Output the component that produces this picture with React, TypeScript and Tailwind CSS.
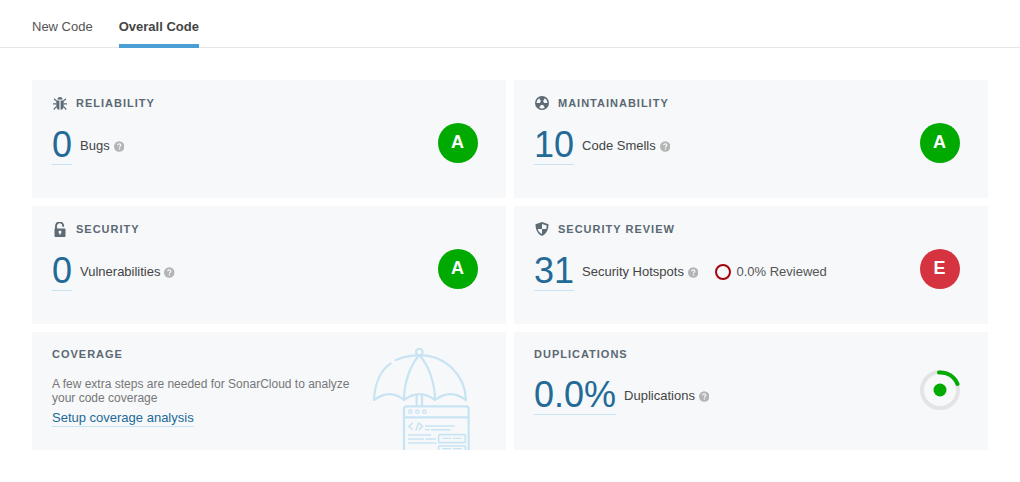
import { ReactNode } from "react";

const font = { fontFamily: '"Liberation Sans", Arial, sans-serif' };

function Help() {
  return (
    <svg width="10.500" height="11" viewBox="0 0 12 12" className="shrink-0">
      <circle cx="6" cy="6" r="6" fill="#b4b4b4" />
      <path d="M4.200 4.700c0-1.100.8-1.700 1.800-1.700s1.800.6 1.800 1.500c0 1.300-1.500 1.300-1.500 2.500" fill="none" stroke="#f6f8fa" strokeWidth="1.400" />
      <rect x="5.500" y="8" width="1.500" height="1.500" fill="#f6f8fa" />
    </svg>
  );
}

function BugIcon() {
  return (
    <svg width="14" height="15" viewBox="0 0 14 15" fill="#5d6b75">
      <path d="M4.300 3.600C4.400 1.900 5.500 1 7 1s2.600.9 2.700 2.600z" />
      <path d="M3.300 4.400h3.100v9.400c-1.800-.2-3.100-1.500-3.100-3.300zM7.600 4.400h3.100v6.100c0 1.800-1.300 3.100-3.100 3.300z" />
      <path d="M1.400 2.300l2.400 2.200v1.400L.6 3.200zM12.600 2.300l-2.400 2.200v1.400l3.200-2.700zM0 7.200h3.400v1.300H0zM10.600 7.200H14v1.300h-3.400zM3.500 9.800v1.400l-2.300 2.700-.9-.8zM10.500 9.800v1.400l2.300 2.700.9-.8z" />
    </svg>
  );
}

function SmellIcon() {
  return (
    <svg width="14" height="14" viewBox="0 0 14 14">
      <circle cx="7" cy="7" r="7" fill="#5d6b75" />
      <path
        d="M9 7H12.600A5.600 5.600 0 0 0 9.800 2.150L8 5.270A2 2 0 0 1 9 7ZM5 7H1.400A5.600 5.600 0 0 1 4.200 2.150L6 5.270A2 2 0 0 0 5 7ZM6 8.730L4.200 11.850A5.600 5.600 0 0 0 9.800 11.850L8 8.730A2 2 0 0 1 6 8.730Z"
        fill="#f6f8fa"
      />
    </svg>
  );
}

function LockIcon() {
  return (
    <svg width="12" height="15" viewBox="0 0 12 15">
      <path d="M2 7V4a3.600 3.600 0 0 1 7.200 0v.8" fill="none" stroke="#5d6b75" strokeWidth="1.900" />
      <rect x="0.500" y="6.500" width="11" height="8.500" rx="1" fill="#5d6b75" />
      <circle cx="6" cy="10" r="1.500" fill="#f6f8fa" />
      <rect x="5.400" y="10" width="1.200" height="2.600" fill="#f6f8fa" />
    </svg>
  );
}

function ShieldIcon() {
  return (
    <svg width="14" height="14" viewBox="0 0 14 14" fill="#5d6b75">
      <path
        fillRule="evenodd"
        d="M7 0l6.500 2.200c0 5-1.700 9.400-6.500 11.800C2.200 11.600.5 7.200.5 2.200zM7 2v5H2.700c.3 2.200 1.800 3.800 4.300 5V7h4.300c.2-1 .3-2 .3-3.400z"
      />
    </svg>
  );
}

function Umbrella() {
  return (
    <svg
      className="absolute right-[34px] bottom-0"
      width="100"
      height="102"
      viewBox="36 24 300 306"
      fill="none"
      stroke="#c8e3f3"
      strokeWidth="6.500"
      strokeLinecap="round"
      strokeLinejoin="round"
    >
      <circle cx="178" cy="36" r="10" />
      <path d="M92 70C60 92 44 135 42 180Q90 145 132 180Q178 145 225 180Q270 145 318 180C316 110 260 45 178 46C150 46 125 52 108 60" />
      <path d="M178 46C150 75 132 130 132 180M178 46C206 75 225 130 225 180" />
      <path d="M170 165V198M186 165V198" />
      <rect x="132" y="199" width="194" height="160" rx="8" />
      <path d="M132 232H326" />
      <circle cx="151" cy="215" r="5" strokeWidth="4" />
      <circle cx="172" cy="215" r="5" strokeWidth="4" />
      <circle cx="193" cy="215" r="5" strokeWidth="4" />
      <path d="M157 250L146 259L157 268M176 248L168 270M178 250L188 259L178 268" strokeWidth="4.500" />
      <path d="M197 258H282M197 269H207M215 269H270M146 285H212M146 297H190M198 297H226M146 309H228" strokeWidth="4.500" />
      <rect x="236" y="284" width="80" height="24" rx="3" strokeWidth="5" />
      <rect x="236" y="318" width="80" height="24" rx="3" strokeWidth="5" />
      <path d="M248 295H272M280 295H304M248 326H272M280 326H304" strokeWidth="4" />
    </svg>
  );
}

function Rating({ letter, red }: { letter: string; red?: boolean }) {
  return (
    <div
      className={`flex h-10 w-10 shrink-0 items-center justify-center rounded-full pb-px pr-px text-[18px] font-bold text-white ${
        red ? "bg-[#d4333f]" : "bg-[#00aa00]"
      }`}
    >
      {letter}
    </div>
  );
}

function Donut() {
  return (
    <svg width="40" height="40" viewBox="0 0 40 40" className="-mt-[4px] shrink-0">
      <circle cx="20" cy="20" r="18" fill="none" stroke="#e4e4e4" strokeWidth="4" />
      <path d="M19 2.500A18 18 0 0 1 37.500 14" fill="none" stroke="#00aa00" strokeWidth="4" strokeLinecap="round" />
      <circle cx="20" cy="20" r="6.500" fill="#00aa00" />
    </svg>
  );
}

function Card({
  title,
  icon,
  tight,
  children,
}: {
  title: string;
  icon?: ReactNode;
  tight?: boolean;
  children: ReactNode;
}) {
  return (
    <div className={`relative h-[118px] overflow-hidden bg-[#f6f8fa] px-5 ${tight ? "pt-[15px]" : "pt-4"}`}>
      <div className="flex h-[14px] items-center">
        {icon && <span className="mr-[9px] flex w-[15px] justify-center">{icon}</span>}
        <h3 className="text-[11px] font-bold tracking-[1px] text-[#5b6873]">{title}</h3>
      </div>
      {children}
    </div>
  );
}

function Measure({
  value,
  label,
  extra,
  right,
  tight,
}: {
  value: string;
  label: string;
  extra?: ReactNode;
  right: ReactNode;
  tight?: boolean;
}) {
  return (
    <div className="mt-[13px] flex items-start pr-2">
      <div className={`flex items-center ${tight ? "mt-[3px]" : "mt-[4px]"}`}>
        <span className="border-b border-[#cae3f2] pb-px text-[36px] leading-[36px] text-[#236a97]">{value}</span>
        <span className="ml-2 mr-1 text-[13px] text-[#444]">{label}</span>
        <Help />
        {extra}
      </div>
      <div className="ml-auto">{right}</div>
    </div>
  );
}

export default function App() {
  return (
    <div style={font} className="h-[482px] w-[1020px] overflow-hidden bg-white">
      <div className="flex h-12 gap-[26px] border-b border-[#e6e6e6] pl-8 text-[13px]">
        <div className="pt-[17px] text-[#555]">New Code</div>
        <div className="-mb-px h-12 border-b-4 border-[#4b9fd5] pt-[17px] font-bold text-[#444]">Overall Code</div>
      </div>
      <div className="mt-8 grid grid-cols-2 gap-2 px-8">
        <Card title="RELIABILITY" icon={<BugIcon />}>
          <Measure value="0" label="Bugs" right={<Rating letter="A" />} />
        </Card>
        <Card title="MAINTAINABILITY" icon={<SmellIcon />}>
          <Measure value="10" label="Code Smells" right={<Rating letter="A" />} />
        </Card>
        <Card title="SECURITY" icon={<LockIcon />}>
          <Measure value="0" label="Vulnerabilities" right={<Rating letter="A" />} />
        </Card>
        <Card title="SECURITY REVIEW" icon={<ShieldIcon />}>
          <Measure
            value="31"
            label="Security Hotspots"
            right={<Rating letter="E" red />}
            extra={
              <div className="ml-[17px] flex items-center text-[13px] text-[#555]">
                <span className="mr-[5px] h-4 w-4 rounded-full border-2 border-[#a4030f]" />
                0.0% Reviewed
              </div>
            }
          />
        </Card>
        <Card title="COVERAGE" tight>
          <p className="mt-4 w-[310px] text-[12px] leading-[14px] text-[#777]">
            A few extra steps are needed for SonarCloud to analyze your code coverage
          </p>
          <a className="mt-[5px] inline-block border-b border-[#cae3f2] text-[13px] leading-[16px] text-[#236a97]">
            Setup coverage analysis
          </a>
          <Umbrella />
        </Card>
        <Card title="DUPLICATIONS" tight>
          <Measure value="0.0%" label="Duplications" right={<Donut />} tight />
        </Card>
      </div>
    </div>
  );
}
